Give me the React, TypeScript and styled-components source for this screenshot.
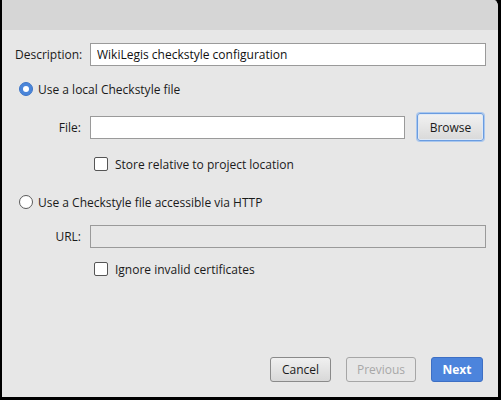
import { createGlobalStyle, styled } from 'styled-components';

const Global = createGlobalStyle`
  html, body {
    margin: 0;
    padding: 0;
    background: #000;
  }
  * {
    box-sizing: border-box;
  }
`;

const Window = styled.div`
  width: 501px;
  height: 400px;
  display: flex;
  flex-direction: column;
  background: #e7e7e7;
  border-left: 2px solid #000;
  border-right: 3px solid #000;
  border-bottom: 3px solid #000;
  border-top-right-radius: 7px;
  overflow: hidden;
  font-family: 'Open Sans', 'Noto Sans', sans-serif;
  font-size: 12px;
  color: #1a1a1a;
`;

const TitleBar = styled.div`
  height: 30px;
  flex: none;
  background: #d6d6d6;
`;

const Content = styled.div`
  flex: 1;
  display: flex;
  flex-direction: column;
  padding: 13px 12px 0 13px;
`;

const FieldRow = styled.div<{ $top?: number; $h?: number }>`
  display: flex;
  align-items: center;
  gap: 7px;
  height: ${(p) => p.$h ?? 23}px;
  margin-top: ${(p) => p.$top ?? 0}px;
`;

const Label = styled.label<{ $left?: boolean }>`
  width: 68px;
  flex: none;
  text-align: ${(p) => (p.$left ? 'left' : 'right')};
  padding-right: ${(p) => (p.$left ? 0 : 2)}px;
  white-space: nowrap;
`;

const TextInput = styled.input`
  flex: 1;
  min-width: 0;
  height: 23px;
  border: 1px solid #9a9a9a;
  background: #fff;
  padding: 0 6px;
  font: inherit;
  color: #111;
  outline: none;

  &:disabled {
    background: #e7e7e7;
  }
`;

const BrowseButton = styled.button`
  width: 67px;
  height: 28px;
  flex: none;
  margin-left: 5px;
  margin-right: 2px;
  border: 1px solid #6a9ce0;
  border-radius: 3px;
  box-shadow: 0 0 0 1px #a9c7ee, inset 0 0 0 1px #dfe9f6;
  background: linear-gradient(#f2f2f2, #d9d9d9);
  font: inherit;
  color: #1a1a1a;
  padding: 0;
`;

const OptionRow = styled.div<{ $top: number; $indent: number }>`
  display: flex;
  align-items: center;
  gap: 5px;
  height: 18px;
  margin-top: ${(p) => p.$top}px;
  margin-left: ${(p) => p.$indent}px;
`;

const Radio = styled.span<{ $checked?: boolean }>`
  width: 14px;
  height: 14px;
  border-radius: 50%;
  flex: none;
  display: flex;
  align-items: center;
  justify-content: center;
  background: ${(p) => (p.$checked ? '#4a85d9' : '#fff')};
  border: 1px solid ${(p) => (p.$checked ? '#3e76c8' : '#5a5a5a')};

  &::after {
    content: '';
    display: ${(p) => (p.$checked ? 'block' : 'none')};
    width: 6px;
    height: 6px;
    border-radius: 50%;
    background: #fff;
  }
`;

const Checkbox = styled.span`
  width: 14px;
  height: 14px;
  flex: none;
  border: 1px solid #555;
  border-radius: 2px;
  background: #fff;
  margin-right: 2px;
`;

const Footer = styled.div`
  margin-top: auto;
  display: flex;
  justify-content: flex-end;
  gap: 15px;
  padding: 0 3px 15px 0;
`;

const Button = styled.button<{ $kind?: 'primary' | 'disabled'; $w: number }>`
  width: ${(p) => p.$w}px;
  height: 25px;
  padding: 0;
  border-radius: 3px;
  font: inherit;
  font-weight: ${(p) => (p.$kind === 'primary' ? 700 : 400)};
  color: ${(p) =>
    p.$kind === 'primary' ? '#fff' : p.$kind === 'disabled' ? '#a8a8a8' : '#1a1a1a'};
  border: 1px solid
    ${(p) =>
      p.$kind === 'primary' ? '#3d6fc4' : p.$kind === 'disabled' ? '#a6a6a6' : '#8a8a8a'};
  background: ${(p) =>
    p.$kind === 'primary'
      ? '#4c84dc'
      : p.$kind === 'disabled'
        ? '#e7e7e7'
        : 'linear-gradient(#f0f0f0, #d8d8d8)'};
`;

export default function App() {
  return (
    <>
      <Global />
      <Window>
        <TitleBar />
        <Content>
          <FieldRow>
            <Label $left>Description:</Label>
            <TextInput defaultValue="WikiLegis checkstyle configuration" />
          </FieldRow>

          <OptionRow $top={14} $indent={4}>
            <Radio $checked />
            <span>Use a local Checkstyle file</span>
          </OptionRow>

          <FieldRow $top={15} $h={28}>
            <Label>File:</Label>
            <TextInput />
            <BrowseButton>Browse</BrowseButton>
          </FieldRow>

          <OptionRow $top={14} $indent={79}>
            <Checkbox />
            <span>Store relative to project location</span>
          </OptionRow>

          <OptionRow $top={20} $indent={4}>
            <Radio />
            <span>Use a Checkstyle file accessible via HTTP</span>
          </OptionRow>

          <FieldRow $top={14}>
            <Label>URL:</Label>
            <TextInput disabled />
          </FieldRow>

          <OptionRow $top={12} $indent={79}>
            <Checkbox />
            <span>Ignore invalid certificates</span>
          </OptionRow>

          <Footer>
            <Button $w={61}>Cancel</Button>
            <Button $kind="disabled" $w={70}>
              Previous
            </Button>
            <Button $kind="primary" $w={52}>
              Next
            </Button>
          </Footer>
        </Content>
      </Window>
    </>
  );
}
